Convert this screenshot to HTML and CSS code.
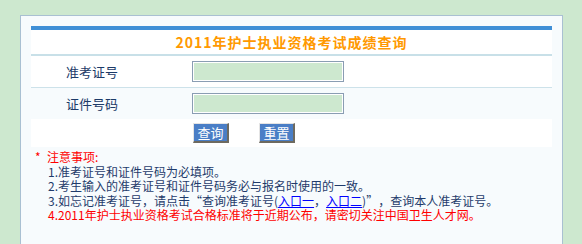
FILE: index.html
```html
<!DOCTYPE html>
<html>
<head>
    <meta charset="UTF-8">
    <title>2011年护士执业资格考试成绩查询</title>
    <link rel="stylesheet" href="styles.css">
</head>
<body>
    <div class="box">
        <div class="panel">
            <div class="title">2011年护士执业资格考试成绩查询</div>
            <div class="row">
                <label class="label" for="zkzh">准考证号</label>
                <input class="field" id="zkzh" name="zkzh">
            </div>
            <div class="row row-alt">
                <label class="label" for="zjhm">证件号码</label>
                <input class="field" id="zjhm" name="zjhm">
            </div>
            <div class="actions">
                <input type="button" class="btn" value="查询">
                <input type="button" class="btn" value="重置">
            </div>
        </div>
        <div class="notes">
            <div class="notes-head"><span class="star">*</span>注意事项:</div>
            <div class="notes-item">1.准考证号和证件号码为必填项。</div>
            <div class="notes-item">2.考生输入的准考证号和证件号码务必与报名时使用的一致。</div>
            <div class="notes-item">3.如忘记准考证号，请点击<span class="q-open">“</span>查询准考证号(<a href="#">入口一</a>，<a href="#">入口二</a>)<span class="q-close">”</span>，查询本人准考证号。</div>
            <div class="notes-item red">4.2011年护士执业资格考试合格标准将于近期公布，请密切关注中国卫生人才网。</div>
        </div>
    </div>
</body>
</html>
```

FILE: styles.css
```css
body {
    margin: 0;
    padding: 15px 0 0 20px;
    background-color: #cde8cf;
    font-family: "Noto Sans CJK SC", sans-serif;
    font-size: 12px;
}

.box {
    width: 521px;
    height: 220px;
    padding: 10px 10px 0;
    border: 1px solid #a9c0d2;
    background-color: #f7fbfd;
}

.panel {
    border-top: 4px solid #3f8fd6;
    background-color: #fff;
}

.title {
    height: 24px;
    line-height: 24px;
    text-align: center;
    color: #ff9900;
    font-size: 14px;
    font-weight: bold;
    letter-spacing: 1px;
    border-bottom: 2px solid #c8e0e8;
}

.row {
    display: flex;
    align-items: center;
    height: 31px;
    border-bottom: 1px solid #cde2ea;
}

.row-alt {
    background-color: #f7fbfd;
    border-bottom: none;
}

.label {
    width: 161px;
    padding-left: 35px;
    box-sizing: border-box;
    color: #1c3a68;
    font-size: 13px;
}

.field {
    width: 152px;
    height: 21px;
    margin: 0;
    padding: 0;
    box-sizing: border-box;
    border: 1px solid #8a9db3;
    box-shadow: inset 0 0 0 1px #fff;
    background-color: #cde8cf;
}

.actions {
    display: flex;
    gap: 30px;
    height: 28px;
    padding: 4px 0 0 162px;
    box-sizing: border-box;
}

.btn {
    width: 36px;
    height: 20px;
    margin: 0;
    padding: 0;
    background-color: #4a7ec6;
    color: #fff;
    font-family: "Noto Sans CJK SC", sans-serif;
    font-size: 13px;
    line-height: 16px;
    border-style: solid;
    border-width: 1px 2px 2px 1px;
    border-color: #e4e4e4 #6e6a60 #6e6a60 #e4e4e4;
}

.notes {
    padding: 3px 0 0 4px;
    line-height: 14.5px;
    color: #1f3b6b;
}

.notes-head {
    color: #ff0000;
}

.star {
    display: inline-block;
    width: 12px;
}

.notes-item {
    padding-left: 13px;
}

.notes-item a {
    color: #0000ff;
}

.q-open,
.q-close {
    display: inline-block;
    width: 12px;
}

.q-open {
    text-align: right;
}

.red {
    color: #ff0000;
}
```
